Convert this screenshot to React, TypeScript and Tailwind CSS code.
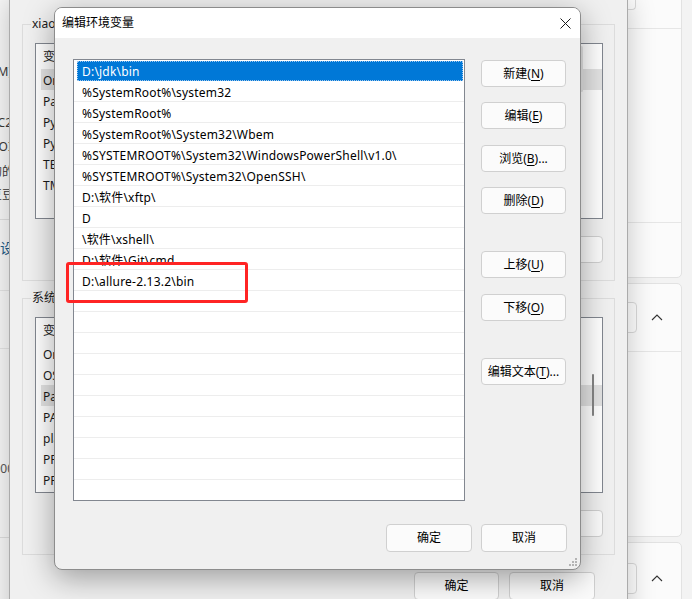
import React from "react";

const F = "font-['Noto_Sans','Noto_Sans_CJK_SC',sans-serif]";

const paths = [
  "D:\\jdk\\bin",
  "%SystemRoot%\\system32",
  "%SystemRoot%",
  "%SystemRoot%\\System32\\Wbem",
  "%SYSTEMROOT%\\System32\\WindowsPowerShell\\v1.0\\",
  "%SYSTEMROOT%\\System32\\OpenSSH\\",
  "D:\\软件\\xftp\\",
  "D",
  "\\软件\\xshell\\",
  "D:\\软件\\Git\\cmd",
  "D:\\allure-2.13.2\\bin",
];

function Btn({
  children,
  className = "",
}: {
  children: React.ReactNode;
  className?: string;
}) {
  return (
    <div
      className={`flex shrink-0 items-center justify-center rounded-[4px] border border-[#d0d0d0] bg-[#fbfbfb] text-[12px] leading-none text-black ${className}`}
    >
      {children}
    </div>
  );
}

function U({ children }: { children: React.ReactNode }) {
  return <span className="underline underline-offset-[2px]">{children}</span>;
}

function Chevron() {
  return (
    <svg width="12" height="7" viewBox="0 0 12 7">
      <path d="M1 6L6 1L11 6" fill="none" stroke="#333" strokeWidth="1.1" />
    </svg>
  );
}

function EnvGroup({
  label,
  rows,
  hi,
  scroll,
}: {
  label: string;
  rows: string[];
  hi: number;
  scroll: "a" | "b";
}) {
  return (
    <div className="relative flex h-[257px] flex-col border border-[#dcdcdc] pl-[12px] pr-[10px] pt-[18px]">
      <span className="absolute left-[8px] top-[-9px] bg-[#f0f0f0] px-[1px] text-[12px] leading-[16px] text-[#1a1a1a]">
        {label}
      </span>
      <div className="relative flex h-[176px] w-[568px] flex-col border border-[#828790] bg-white">
        <div className="flex h-[25px] items-center pl-[7px] pt-[1px] text-[12px] text-[#1a1a1a]">
          变量
        </div>
        {rows.map((r, i) => (
          <div
            key={i}
            className={`ml-[5px] flex h-[21px] items-center pl-[2px] pt-[2px] text-[12px] text-[#1a1a1a] ${
              i === hi ? "bg-[#e3e3e3]" : ""
            }`}
          >
            {r}
          </div>
        ))}
        {scroll === "a" ? (
          <div className="absolute right-[19px] top-[2px] h-[46px] w-[3px] rounded-full bg-[#e6e6e6]" />
        ) : (
          <div className="absolute right-[8px] top-[56px] h-[42px] w-[2px] rounded-full bg-[#858585]" />
        )}
      </div>
      <div className="mt-[17px] flex justify-end gap-[10px] pr-[1px]">
        <Btn className="h-[27px] w-[85px]">新建(N)...</Btn>
        <Btn className="h-[27px] w-[85px]">编辑(E)...</Btn>
        <Btn className="h-[27px] w-[85px]">删除(D)</Btn>
      </div>
    </div>
  );
}

export default function App() {
  return (
    <div
      className={`relative h-[599px] w-[692px] overflow-hidden bg-[#f3f3f3] text-black ${F}`}
    >
      {/* Settings window (back) - left sidebar fragments */}
      <div className="absolute left-[-54px] top-0 flex w-[70px] flex-col items-end bg-[#f7f7f7] text-[12px] text-[#3a3a3a]">
        <div className="mt-[62px] flex h-[20px] items-center whitespace-nowrap pr-[4px]">
          内存(M)
        </div>
        <div className="mt-[31px] flex h-[20px] items-center whitespace-nowrap pr-[4px]">
          iC2
        </div>
        <div className="mt-[4px] flex h-[20px] items-center whitespace-nowrap pr-[4px]">
          OI
        </div>
        <div className="mt-[5px] flex h-[20px] items-center whitespace-nowrap pr-[2px]">
          的的
        </div>
        <div className="mt-[3px] flex h-[20px] items-center whitespace-nowrap pr-[2px]">
          疌豆豆
        </div>
        <div className="mt-[14px] h-[1px] w-full bg-[#dedede]" />
        <div className="mt-[16px] flex h-[22px] items-center whitespace-nowrap pr-[2px] text-[14px] text-[#1c5a86]">
          设设
        </div>
        <div className="mt-[32px] h-[1px] w-full bg-[#e4e4e4]" />
        <div className="mt-[57px] h-[1px] w-full bg-[#e4e4e4]" />
        <div className="mt-[110px] flex h-[20px] items-center whitespace-nowrap pr-[2px] text-[#555]">
          000
        </div>
        <div className="mt-[58px] h-[1px] w-full bg-[#dedede]" />
        <div className="h-[80px]" />
      </div>

      {/* Settings window - right cards */}
      <div className="absolute left-[540px] top-[-20px] flex w-[142px] flex-col gap-[5px]">
        <div className="flex h-[298px] flex-col rounded-[5px] border border-[#e2e2e2] bg-[#fbfbfb]">
          <div className="flex h-[47px] justify-end pr-[45px]">
            <div className="h-[29px] w-[60px] rounded-b-[4px] border border-t-0 border-[#d9d9d9] bg-[#fdfdfd]" />
          </div>
          <div className="h-[194px] border-t border-[#e6e6e6]" />
          <div className="flex-1 border-t border-[#e6e6e6]" />
        </div>
        <div className="flex h-[254px] flex-col rounded-[5px] border border-[#e2e2e2] bg-[#fbfbfb]">
          <div className="flex h-[67px] items-center justify-end gap-[14px] pr-[18px]">
            <div className="h-[31px] w-[60px] rounded-[4px] border border-[#d9d9d9] bg-[#fdfdfd]" />
            <Chevron />
          </div>
          <div className="flex-1 border-t border-[#e6e6e6]" />
        </div>
        <div className="flex h-[100px] flex-col rounded-[5px] border border-[#e2e2e2] bg-[#fbfbfb]">
          <div className="flex h-[70px] items-center justify-end gap-[14px] pr-[18px]">
            <div className="h-[31px] w-[60px] rounded-[4px] border border-[#d9d9d9] bg-[#fdfdfd]" />
            <Chevron />
          </div>
        </div>
      </div>

      {/* Environment variables dialog (middle) */}
      <div className="absolute left-[9px] top-0 flex h-[640px] w-[619px] flex-col border-x border-[#ababab] bg-[#f0f0f0] px-[12px] pt-[24px] shadow-[0_0_26px_rgba(0,0,0,0.22)]">
        <EnvGroup
          label="xiao 的用户变量(U)"
          rows={[
            "OneDrive",
            "Path",
            "PyCharm",
            "PyCharm Community Edition",
            "TEMP",
            "TMP",
          ]}
          hi={0}
          scroll="a"
        />
        <div className="h-[17px]" />
        <EnvGroup
          label="系统变量(S)"
          rows={[
            "OnlineServices",
            "OS",
            "Path",
            "PATHEXT",
            "platformcode",
            "PROCESSOR_ARCHITECTURE",
            "PROCESSOR_IDENTIFIER",
          ]}
          hi={2}
          scroll="b"
        />
        <div className="mt-[17px] flex justify-end gap-[10px] pr-[20px]">
          <Btn className="h-[28px] w-[85px] border-[#c8c8c8]">确定</Btn>
          <Btn className="h-[28px] w-[86px] border-[#c8c8c8]">取消</Btn>
        </div>
      </div>

      {/* Edit environment variable dialog (front) */}
      <div className="absolute left-[54px] top-[7px] flex h-[563px] w-[527px] flex-col overflow-hidden rounded-[8px] border border-[#8c8c8c] bg-[#f0f0f0] shadow-[0_8px_30px_rgba(0,0,0,0.35)]">
        <div className="flex h-[30px] shrink-0 items-center justify-between bg-white pl-[7px] pr-[9px]">
          <span className="text-[12px] text-black">编辑环境变量</span>
          <svg width="11" height="11" viewBox="0 0 11 11">
            <path
              d="M0.5 0.5L10.5 10.5M10.5 0.5L0.5 10.5"
              stroke="#1a1a1a"
              strokeWidth="1"
            />
          </svg>
        </div>
        <div className="flex pl-[18px] pt-[21px]">
          <div className="flex h-[442px] w-[392px] flex-col overflow-hidden border border-[#828790] bg-white">
            {Array.from({ length: 21 }).map((_, i) => {
              const t = paths[i] ?? "";
              if (i === 0) {
                return (
                  <div
                    key={i}
                    className="flex h-[21px] shrink-0 pl-[3px] pr-[1px] pt-[1px]"
                  >
                    <div className="flex flex-1 items-center border border-dotted border-[#9fc7ee] bg-[#0078d7] pl-[4px] pt-[2px] text-[12px] tracking-[0.2px] text-white">
                      {t}
                    </div>
                  </div>
                );
              }
              return (
                <div
                  key={i}
                  className="flex h-[21px] shrink-0 items-center border-b border-[#ededed] pl-[8px] pt-[3px] text-[12px] tracking-[0.2px] text-black"
                >
                  {t}
                </div>
              );
            })}
          </div>
          <div className="ml-[16px] flex flex-col pt-[1px]">
            <Btn className="h-[27px] w-[85px]">
              新建(<U>N</U>)
            </Btn>
            <Btn className="mt-[15px] h-[27px] w-[85px]">
              编辑(<U>E</U>)
            </Btn>
            <Btn className="mt-[16px] h-[27px] w-[85px]">
              浏览(<U>B</U>)...
            </Btn>
            <Btn className="mt-[15px] h-[27px] w-[85px]">
              删除(<U>D</U>)
            </Btn>
            <Btn className="mt-[37px] h-[27px] w-[85px]">
              上移(<U>U</U>)
            </Btn>
            <Btn className="mt-[16px] h-[27px] w-[85px]">
              下移(<U>O</U>)
            </Btn>
            <Btn className="mt-[37px] h-[27px] w-[85px]">
              编辑文本(<U>T</U>)...
            </Btn>
          </div>
        </div>
        <div className="mt-[23px] flex justify-end gap-[9px] pr-[13px]">
          <Btn className="h-[28px] w-[86px] border-[1.5px] border-[#0067c0]">
            确定
          </Btn>
          <Btn className="h-[28px] w-[86px] border-[#cccccc]">取消</Btn>
        </div>
        <svg
          className="absolute bottom-[2px] right-[2px]"
          width="10"
          height="10"
          viewBox="0 0 10 10"
        >
          <rect x="7" y="1" width="2" height="2" fill="#b4b4b4" />
          <rect x="4" y="4" width="2" height="2" fill="#b4b4b4" />
          <rect x="7" y="4" width="2" height="2" fill="#b4b4b4" />
          <rect x="1" y="7" width="2" height="2" fill="#b4b4b4" />
          <rect x="4" y="7" width="2" height="2" fill="#b4b4b4" />
          <rect x="7" y="7" width="2" height="2" fill="#b4b4b4" />
        </svg>
      </div>

      {/* Red annotation box */}
      <div className="absolute left-[66px] top-[262px] h-[41px] w-[182px] rounded-[3px] border-[3px] border-[#ff2424]" />
    </div>
  );
}
